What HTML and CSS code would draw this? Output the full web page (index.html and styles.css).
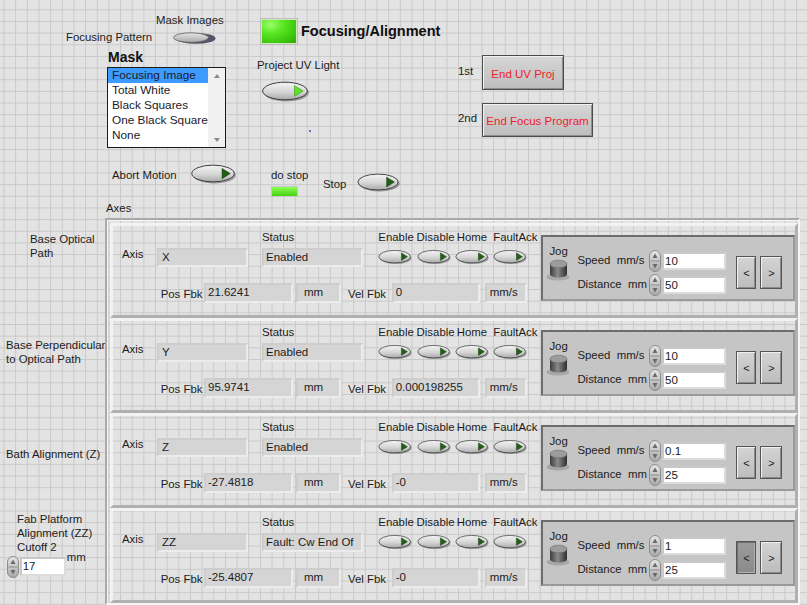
FILE: index.html
```html
<!DOCTYPE html>
<html>
<head>
<meta charset="utf-8">
<link rel="stylesheet" href="styles.css">
</head>
<body>
<svg class="defs" width="0" height="0">
  <defs>
    <linearGradient id="gb" x1="0" y1="0" x2="0" y2="1">
      <stop offset="0" stop-color="#f4f4f4"/>
      <stop offset=".55" stop-color="#d6d6d6"/>
      <stop offset="1" stop-color="#a9a9a9"/>
    </linearGradient>
    <linearGradient id="gs" x1="0" y1="0" x2="0" y2="1">
      <stop offset="0" stop-color="#e6e6e6"/>
      <stop offset="1" stop-color="#a8a8a8"/>
    </linearGradient>
    <linearGradient id="gk" x1="0" y1="0" x2="1" y2="0">
      <stop offset="0" stop-color="#3c3c3c"/>
      <stop offset=".45" stop-color="#8a8a8a"/>
      <stop offset="1" stop-color="#2e2e2e"/>
    </linearGradient>
    <symbol id="obtn" viewBox="0 0 48 21">
      <ellipse cx="25" cy="11.6" rx="22.4" ry="8.9" fill="#5d5d5d" opacity=".55"/>
      <ellipse cx="23.5" cy="10" rx="22.3" ry="8.8" fill="url(#gb)" stroke="#3a3a3a" stroke-width="1"/>
      <path d="M33 4.6 L41.6 10 L33 15.4 Z" fill="#235e17" stroke="#173f10" stroke-width=".6"/>
    </symbol>
    <symbol id="obtn-on" viewBox="0 0 48 21">
      <ellipse cx="25" cy="11.6" rx="22.4" ry="8.9" fill="#5d5d5d" opacity=".55"/>
      <ellipse cx="23.5" cy="10" rx="22.3" ry="8.8" fill="url(#gb)" stroke="#3a3a3a" stroke-width="1"/>
      <path d="M33 4.6 L41.6 10 L33 15.4 Z" fill="#5ee02a" stroke="#3aa014" stroke-width=".6"/>
    </symbol>
    <symbol id="spin" viewBox="0 0 12 22">
      <rect x=".5" y=".5" width="11" height="21" rx="5.5" fill="url(#gs)" stroke="#8c8c8c"/>
      <line x1="1.5" y1="11" x2="10.5" y2="11" stroke="#8c8c8c"/>
      <path d="M6 3.5 L8.5 8 L3.5 8 Z" fill="#6a6a6a"/>
      <path d="M6 18.5 L8.5 14 L3.5 14 Z" fill="#6a6a6a"/>
    </symbol>
    <symbol id="knob" viewBox="0 0 26 24">
      <ellipse cx="12" cy="20" rx="11.5" ry="3.6" fill="#8c8c8c" opacity=".55"/>
      <path d="M4 7 L4 17 A8.5 3.6 0 0 0 21 17 L21 7 Z" fill="url(#gk)"/>
      <ellipse cx="12.5" cy="7" rx="8.5" ry="3.8" fill="#9c9c9c" stroke="#6a6a6a" stroke-width=".6"/>
    </symbol>
  </defs>
</svg>

<div class="panel">
  <div class="top">
    <div class="col-a">
      <div class="fp-row">
        <span class="lbl fp-lbl">Focusing Pattern</span>
        <div class="switch-grp">
          <span class="lbl">Mask Images</span>
          <svg class="switch" viewBox="0 0 44 12">
            <ellipse cx="24" cy="6.4" rx="19.5" ry="5.4" fill="#55556a"/>
            <ellipse cx="19" cy="5.6" rx="17.5" ry="4.8" fill="url(#gs)" stroke="#5a5a5a" stroke-width=".8"/>
          </svg>
        </div>
      </div>
      <div class="mask-lbl">Mask</div>
      <div class="listbox">
        <ul class="items">
          <li class="sel">Focusing Image</li>
          <li>Total White</li>
          <li>Black Squares</li>
          <li>One Black Square</li>
          <li>None</li>
        </ul>
        <div class="scroll">
          <span class="arr up"></span>
          <span class="arr dn"></span>
        </div>
      </div>
    </div>

    <div class="col-b">
      <div class="led-row">
        <div class="led-big"></div>
        <div class="title">Focusing/Alignment</div>
      </div>
      <div class="lbl puv-lbl">Project UV Light</div>
      <svg class="puv-btn"><use href="#obtn-on"/></svg>
      <div class="dot"></div>
    </div>

    <div class="col-c">
      <div class="ord-row r1">
        <span class="lbl ord">1st</span>
        <div class="pbtn w82">End UV Proj</div>
      </div>
      <div class="ord-row r2">
        <span class="lbl ord">2nd</span>
        <div class="pbtn w111">End Focus Program</div>
      </div>
    </div>
  </div>

  <div class="ctrl-row">
    <span class="lbl abort-lbl">Abort Motion</span>
    <svg class="obtn abort-btn"><use href="#obtn"/></svg>
    <div class="dostop">
      <span class="lbl">do stop</span>
      <div class="led-small"></div>
    </div>
    <span class="lbl stop-lbl">Stop</span>
    <svg class="obtn stop-btn"><use href="#obtn"/></svg>
  </div>

  <div class="lbl axes-lbl">Axes</div>

  <div class="axes">
    <div class="axis-names">
      <div class="nm n1">Base Optical<br>Path</div>
      <div class="nm n2">Base Perpendicular<br>to Optical Path</div>
      <div class="nm n3">Bath Alignment (Z)</div>
      <div class="nm n4">
        Fab Platform<br>Alignment (ZZ)
        <div class="cut-row"><span>Cutoff 2</span><span class="mm-unit">mm</span></div>
        <div class="num-ctl">
          <svg class="spin"><use href="#spin"/></svg>
          <div class="num-in">17</div>
        </div>
      </div>
    </div>

    <div class="axes-frame">
      <!-- Row 1 -->
      <div class="cluster">
        <div class="main">
          <div class="line1">
            <span class="lbl axis-lbl">Axis</span>
            <div class="ind axis-box">X</div>
            <div class="status-col">
              <span class="lbl">Status</span>
              <div class="ind status-box">Enabled</div>
            </div>
            <div class="btns">
              <span class="lbl">Enable</span><span class="lbl">Disable</span><span class="lbl">Home</span><span class="lbl">FaultAck</span>
              <svg class="sbtn"><use href="#obtn"/></svg><svg class="sbtn"><use href="#obtn"/></svg><svg class="sbtn"><use href="#obtn"/></svg><svg class="sbtn"><use href="#obtn"/></svg>
            </div>
          </div>
          <div class="line2">
            <span class="lbl pos-lbl">Pos Fbk</span>
            <div class="ind pos-box">21.6241</div>
            <div class="ind mm-box">mm</div>
            <span class="lbl vel-lbl">Vel Fbk</span>
            <div class="ind vel-box">0</div>
            <div class="ind mms-box">mm/s</div>
          </div>
        </div>
        <div class="jog">
          <div class="jog-left">
            <span class="lbl">Jog</span>
            <svg class="knob"><use href="#knob"/></svg>
          </div>
          <div class="jog-fields">
            <span class="lbl jl">Speed  mm/s</span><svg class="spin"><use href="#spin"/></svg><div class="num-in jin">10</div>
            <span class="lbl jl">Distance  mm</span><svg class="spin"><use href="#spin"/></svg><div class="num-in jin">50</div>
          </div>
          <div class="jog-btns">
            <div class="jbtn">&lt;</div>
            <div class="jbtn">&gt;</div>
          </div>
        </div>
      </div>

      <!-- Row 2 -->
      <div class="cluster">
        <div class="main">
          <div class="line1">
            <span class="lbl axis-lbl">Axis</span>
            <div class="ind axis-box">Y</div>
            <div class="status-col">
              <span class="lbl">Status</span>
              <div class="ind status-box">Enabled</div>
            </div>
            <div class="btns">
              <span class="lbl">Enable</span><span class="lbl">Disable</span><span class="lbl">Home</span><span class="lbl">FaultAck</span>
              <svg class="sbtn"><use href="#obtn"/></svg><svg class="sbtn"><use href="#obtn"/></svg><svg class="sbtn"><use href="#obtn"/></svg><svg class="sbtn"><use href="#obtn"/></svg>
            </div>
          </div>
          <div class="line2">
            <span class="lbl pos-lbl">Pos Fbk</span>
            <div class="ind pos-box">95.9741</div>
            <div class="ind mm-box">mm</div>
            <span class="lbl vel-lbl">Vel Fbk</span>
            <div class="ind vel-box">0.000198255</div>
            <div class="ind mms-box">mm/s</div>
          </div>
        </div>
        <div class="jog">
          <div class="jog-left">
            <span class="lbl">Jog</span>
            <svg class="knob"><use href="#knob"/></svg>
          </div>
          <div class="jog-fields">
            <span class="lbl jl">Speed  mm/s</span><svg class="spin"><use href="#spin"/></svg><div class="num-in jin">10</div>
            <span class="lbl jl">Distance  mm</span><svg class="spin"><use href="#spin"/></svg><div class="num-in jin">50</div>
          </div>
          <div class="jog-btns">
            <div class="jbtn">&lt;</div>
            <div class="jbtn">&gt;</div>
          </div>
        </div>
      </div>

      <!-- Row 3 -->
      <div class="cluster">
        <div class="main">
          <div class="line1">
            <span class="lbl axis-lbl">Axis</span>
            <div class="ind axis-box">Z</div>
            <div class="status-col">
              <span class="lbl">Status</span>
              <div class="ind status-box">Enabled</div>
            </div>
            <div class="btns">
              <span class="lbl">Enable</span><span class="lbl">Disable</span><span class="lbl">Home</span><span class="lbl">FaultAck</span>
              <svg class="sbtn"><use href="#obtn"/></svg><svg class="sbtn"><use href="#obtn"/></svg><svg class="sbtn"><use href="#obtn"/></svg><svg class="sbtn"><use href="#obtn"/></svg>
            </div>
          </div>
          <div class="line2">
            <span class="lbl pos-lbl">Pos Fbk</span>
            <div class="ind pos-box">-27.4818</div>
            <div class="ind mm-box">mm</div>
            <span class="lbl vel-lbl">Vel Fbk</span>
            <div class="ind vel-box">-0</div>
            <div class="ind mms-box">mm/s</div>
          </div>
        </div>
        <div class="jog">
          <div class="jog-left">
            <span class="lbl">Jog</span>
            <svg class="knob"><use href="#knob"/></svg>
          </div>
          <div class="jog-fields">
            <span class="lbl jl">Speed  mm/s</span><svg class="spin"><use href="#spin"/></svg><div class="num-in jin">0.1</div>
            <span class="lbl jl">Distance  mm</span><svg class="spin"><use href="#spin"/></svg><div class="num-in jin">25</div>
          </div>
          <div class="jog-btns">
            <div class="jbtn">&lt;</div>
            <div class="jbtn">&gt;</div>
          </div>
        </div>
      </div>

      <!-- Row 4 -->
      <div class="cluster">
        <div class="main">
          <div class="line1">
            <span class="lbl axis-lbl">Axis</span>
            <div class="ind axis-box">ZZ</div>
            <div class="status-col">
              <span class="lbl">Status</span>
              <div class="ind status-box">Fault: Cw End Of</div>
            </div>
            <div class="btns">
              <span class="lbl">Enable</span><span class="lbl">Disable</span><span class="lbl">Home</span><span class="lbl">FaultAck</span>
              <svg class="sbtn"><use href="#obtn"/></svg><svg class="sbtn"><use href="#obtn"/></svg><svg class="sbtn"><use href="#obtn"/></svg><svg class="sbtn"><use href="#obtn"/></svg>
            </div>
          </div>
          <div class="line2">
            <span class="lbl pos-lbl">Pos Fbk</span>
            <div class="ind pos-box">-25.4807</div>
            <div class="ind mm-box">mm</div>
            <span class="lbl vel-lbl">Vel Fbk</span>
            <div class="ind vel-box">-0</div>
            <div class="ind mms-box">mm/s</div>
          </div>
        </div>
        <div class="jog">
          <div class="jog-left">
            <span class="lbl">Jog</span>
            <svg class="knob"><use href="#knob"/></svg>
          </div>
          <div class="jog-fields">
            <span class="lbl jl">Speed  mm/s</span><svg class="spin"><use href="#spin"/></svg><div class="num-in jin">1</div>
            <span class="lbl jl">Distance  mm</span><svg class="spin"><use href="#spin"/></svg><div class="num-in jin">25</div>
          </div>
          <div class="jog-btns">
            <div class="jbtn pressed">&lt;</div>
            <div class="jbtn">&gt;</div>
          </div>
        </div>
      </div>
    </div>
  </div>
</div>
</body>
</html>
```

FILE: styles.css
```css
html, body {
  margin: 0;
  padding: 0;
}
body {
  width: 807px;
  height: 605px;
  overflow: hidden;
  font-family: "Liberation Sans", Arial, sans-serif;
  font-size: 11.4px;
  line-height: 14px;
  color: #1c1c1c;
  background-color: #e3e3e3;
  background-image:
    linear-gradient(90deg, #c9c9c9 1px, transparent 1px),
    linear-gradient(180deg, #c9c9c9 1px, transparent 1px);
  background-size: 11.67px 11.67px;
  background-position: 3.5px 9.3px;
}
.defs { position: absolute; width: 0; height: 0; }

.lbl { white-space: pre; display: block; }

/* ---------- top area ---------- */
.top {
  display: flex;
  height: 160px;
}
.col-a {
  margin-left: 66px;
  width: 191px;
  padding-top: 13px;
  box-sizing: border-box;
}
.fp-row { display: flex; align-items: flex-start; }
.fp-lbl { width: 90px; margin-top: 17px; }
.switch-grp { display: flex; flex-direction: column; }
.switch { width: 44px; height: 12px; margin-top: 5px; margin-left: 16px; }
.mask-lbl {
  margin-top: 5px;
  margin-left: 42px;
  font-weight: bold;
  font-size: 14px;
  line-height: 16px;
  color: #111;
}
.listbox {
  margin-top: 2px;
  margin-left: 41px;
  width: 119px;
  height: 81px;
  box-sizing: border-box;
  border: 1px solid #1a1a1a;
  background: #fff;
  display: flex;
}
.items {
  list-style: none;
  margin: 0;
  padding: 0;
  width: 100px;
  font-size: 11.8px;
  line-height: 15px;
  color: #1a1a2a;
}
.items li { padding-left: 4px; height: 15px; white-space: nowrap; }
.items li.sel { background: #3d9bff; }
.scroll {
  flex: 1;
  background: #f0f0f0;
  display: flex;
  flex-direction: column;
  justify-content: space-between;
  align-items: center;
  padding: 6px 0 5px;
}
.arr { width: 0; height: 0; border-left: 3.5px solid transparent; border-right: 3.5px solid transparent; }
.arr.up { border-bottom: 4px solid #8a8a8a; }
.arr.dn { border-top: 4px solid #8a8a8a; }

.col-b { width: 200px; }
.led-row { display: flex; align-items: center; margin-top: 19px; margin-left: 4px; }
.led-big {
  width: 36px;
  height: 25px;
  box-sizing: border-box;
  border: 1px solid #cfe8c0;
  background: radial-gradient(ellipse at 25% 20%, #9cff6a 0, #5be623 35%, #3fc90f 70%, #33a80a 100%);
  box-shadow: 0 0 0 1px #bdbdbd;
}
.title {
  margin-left: 4px;
  font-weight: bold;
  font-size: 14.5px;
  line-height: 17px;
  color: #0f0f0f;
}
.puv-lbl { margin-top: 14px; }
.puv-btn { display: block; width: 49px; height: 21px; margin-top: 9px; margin-left: 4px; }
.dot { width: 2px; height: 2px; background: #6b6bd6; margin-top: 28px; margin-left: 52px; }

.col-c { width: 150px; }
.ord-row { display: flex; align-items: flex-start; }
.ord-row.r1 { margin-top: 55px; }
.ord-row.r2 { margin-top: 13px; }
.ord { width: 25px; padding-left: 1px; box-sizing: border-box; }
.r1 .ord { margin-top: 9px; }
.r2 .ord { margin-top: 8px; }
.pbtn {
  box-sizing: border-box;
  border: 1px solid #4b4b4b;
  box-shadow: inset 1px 1px 0 #f2f2f2, inset -1px -1px 0 #8e8e8e;
  background: linear-gradient(#d6d6d6, #bdbdbd);
  color: #f0202c;
  font-size: 11.5px;
  display: flex;
  align-items: center;
  justify-content: center;
  padding-top: 2px;
}
.pbtn.w82 { width: 82px; height: 35px; }
.pbtn.w111 { width: 111px; height: 34px; }

/* ---------- control row ---------- */
.ctrl-row {
  display: flex;
  align-items: flex-start;
  height: 40px;
  padding-left: 112px;
}
.abort-lbl { width: 78px; margin-top: 8px; }
.obtn { display: block; width: 47px; height: 20px; }
.abort-btn { margin-top: 4px; }
.dostop { margin-left: 34px; width: 52px; margin-top: 8px; }
.led-small {
  width: 25px;
  height: 9px;
  margin-top: 5px;
  margin-left: 1px;
  background: linear-gradient(#8cff52, #45d012);
  box-shadow: 0 0 0 1px #c8c8c8;
}
.stop-lbl { width: 32px; margin-top: 16.6px; }
.stop-btn { margin-top: 13px; height: 19px; }

.axes-lbl { margin-top: 1px; padding-left: 106px; }

/* ---------- axes ---------- */
.axes {
  display: flex;
  margin-top: 3px;
}
.axis-names { width: 105px; padding-top: 5px; }
.nm { height: 95px; box-sizing: border-box; white-space: nowrap; }
.n1 { padding: 9px 0 0 30px; }
.n2 { padding: 20px 0 0 6px; }
.n3 { padding: 34px 0 0 6px; }
.n4 { padding: 4px 0 0 17px; }
.cut-row { display: flex; height: 14px; }
.mm-unit { margin-left: 10px; margin-top: 10px; }
.num-ctl { display: flex; margin-top: 2.4px; margin-left: -10.3px; align-items: flex-start; }
.spin { display: block; width: 12px; height: 22px; }
.num-in {
  box-sizing: border-box;
  background: #fff;
  border: 2px solid #c8c8c8;
  border-right-color: #dcdcdc;
  border-bottom-color: #dcdcdc;
  padding-left: 1px;
  line-height: 15px;
  font-size: 11.5px;
}
.num-ctl .num-in { width: 46px; height: 19px; margin-left: 1px; margin-top: 1px; }

.axes-frame {
  width: 695px;
  box-sizing: border-box;
  border: 2px solid;
  border-color: #a9a9a9 #f6f6f6 #f6f6f6 #a9a9a9;
  padding: 3px 0 0 3px;
  box-shadow: inset 1px 1px 0 #f4f4f4;
}
.cluster {
  height: 95px;
  box-sizing: border-box;
  border: 3px solid;
  border-color: #f2f2f2 #b0b0b0 #b0b0b0 #f2f2f2;
  display: flex;
}
.main { width: 429px; }
.line1 { display: flex; align-items: flex-start; }
.axis-lbl { width: 35px; margin-left: 9px; margin-top: 21px; }
.ind {
  box-sizing: border-box;
  background: #d5d5d5;
  border: 2px solid;
  border-color: #cdcdcd #ececec #ececec #cdcdcd;
  padding-left: 2px;
  line-height: 15px;
  white-space: nowrap;
  overflow: hidden;
  font-size: 11.5px;
}
.axis-box { width: 91px; height: 19px; margin-top: 22px; padding-left: 3px; }
.status-col { margin-left: 14px; margin-top: 4px; }
.status-box { width: 101px; height: 19px; margin-top: 4px; }
.btns {
  display: grid;
  grid-template-columns: repeat(4, 34px);
  column-gap: 4.3px;
  margin-left: 15.3px;
  margin-top: 4px;
}
.btns .lbl { text-align: center; overflow: visible; width: 34px; }
.btns .lbl:nth-child(4) { width: 46px; text-align: left; margin-left: 0; }
.sbtn { display: block; width: 34px; height: 20px; margin-top: 3px; }

.line2 { display: flex; align-items: center; margin-top: 16px; }
.pos-lbl { margin-left: 47.7px; width: 43.3px; margin-top: 2px; }
.pos-box { width: 89px; height: 20px; }
.mm-box { width: 45px; height: 20px; margin-left: 3px; padding-left: 6px; }
.vel-lbl { margin-left: 7px; width: 43.7px; margin-top: 2px; }
.vel-box { width: 88px; height: 20px; }
.mms-box { width: 42px; height: 20px; margin-left: 5px; padding-left: 3px; }

.jog {
  width: 254px;
  height: 66px;
  margin-top: 9px;
  box-sizing: border-box;
  border: 2px solid;
  border-color: #6c6c6c #9a9a9a #9a9a9a #6c6c6c;
  background: #c5c5c5;
  display: flex;
  align-items: flex-start;
}
.jog-left { width: 34px; padding-top: 7px; padding-left: 6px; box-sizing: border-box; }
.knob { display: block; width: 26px; height: 24px; margin-left: -3px; margin-top: -1px; }
.jog-fields {
  display: grid;
  grid-template-columns: 72px 12px 64px;
  grid-template-rows: 22px 22px;
  row-gap: 2px;
  align-items: center;
  margin-top: 13px;
}
.jl { margin-top: -2px; }
.jin { width: 64px; height: 18px; margin-left: 0.7px; }
.jog-btns { display: flex; gap: 4px; margin-left: 11px; margin-top: 19px; }
.jbtn {
  width: 20px;
  height: 33px;
  box-sizing: border-box;
  border: 1px solid #555;
  box-shadow: inset 1px 1px 0 #f0f0f0, inset -1px -1px 0 #8a8a8a;
  background: linear-gradient(#d4d4d4, #bcbcbc);
  display: flex;
  align-items: center;
  justify-content: center;
  font-size: 11px;
}
.jbtn + .jbtn { width: 22px; }
.jbtn.pressed {
  background: linear-gradient(#9c9c9c, #8a8a8a);
  box-shadow: inset 1px 1px 0 #6e6e6e, inset -1px -1px 0 #b0b0b0;
}
```
